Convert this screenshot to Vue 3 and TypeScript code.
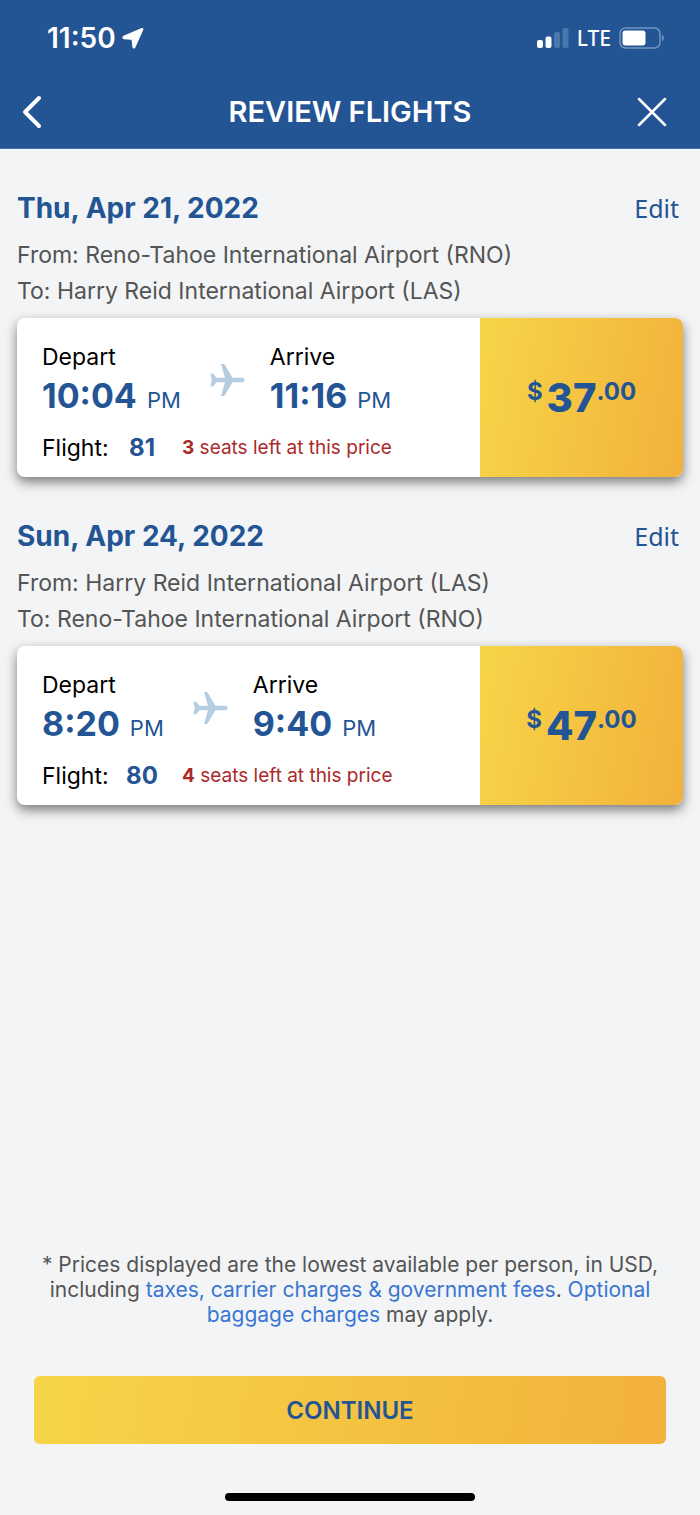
<script setup lang="ts">
interface Clock {
  time: string
  period: string
}

interface Flight {
  date: string
  from: string
  to: string
  depart: Clock
  arrive: Clock
  number: string
  seats: number
  dollars: string
  cents: string
}

const flights: Flight[] = [
  {
    date: 'Thu, Apr 21, 2022',
    from: 'Reno-Tahoe International Airport (RNO)',
    to: 'Harry Reid International Airport (LAS)',
    depart: { time: '10:04', period: 'PM' },
    arrive: { time: '11:16', period: 'PM' },
    number: '81',
    seats: 3,
    dollars: '37',
    cents: '.00',
  },
  {
    date: 'Sun, Apr 24, 2022',
    from: 'Harry Reid International Airport (LAS)',
    to: 'Reno-Tahoe International Airport (RNO)',
    depart: { time: '8:20', period: 'PM' },
    arrive: { time: '9:40', period: 'PM' },
    number: '80',
    seats: 4,
    dollars: '47',
    cents: '.00',
  },
]
</script>

<template>
  <div class="screen">
    <header class="top">
      <div class="status">
        <div class="clock">
          <span>11:50</span>
          <svg width="22" height="22" viewBox="0 0 22 22" aria-hidden="true">
            <path d="M19.600 1 1.600 8.700C0 9.400.2 12 2 12.200l7 .6c.4 0 .6.200.7.600l.7 6.600c.2 1.900 2.300 2 3 .4L21.300 2.700c.5-1.200-.5-2.100-1.700-1.700Z" fill="#fff" />
          </svg>
        </div>
        <div class="signals">
          <svg width="32" height="22" viewBox="0 0 32 22" aria-hidden="true">
            <rect x="0" y="13" width="6" height="8" rx="2" fill="#fff" />
            <rect x="8.500" y="9.500" width="6" height="11.500" rx="2" fill="#fff" />
            <rect x="17" y="5" width="6" height="16" rx="2" fill="#4a78ac" />
            <rect x="25.500" y="1" width="6" height="20" rx="2" fill="#4a78ac" />
          </svg>
          <span class="network">LTE</span>
          <svg width="46" height="22" viewBox="0 0 46 22" aria-hidden="true">
            <rect x="1" y="1" width="40" height="20" rx="5.500" fill="none" stroke="#7395bf" stroke-width="1.500" />
            <rect x="3.500" y="3.500" width="23" height="15" rx="3" fill="#fff" />
            <path d="M43 7.500c2.300 1.500 2.300 5.500 0 7Z" fill="#7395bf" />
          </svg>
        </div>
      </div>
      <div class="nav">
        <button class="icon-button back" type="button" aria-label="Back">
          <svg width="22" height="34" viewBox="0 0 22 34" aria-hidden="true">
            <path d="M18 3 4 17l14 14" fill="none" stroke="#fff" stroke-width="4" stroke-linecap="round" stroke-linejoin="round" />
          </svg>
        </button>
        <h1>REVIEW FLIGHTS</h1>
        <button class="icon-button" type="button" aria-label="Close">
          <svg width="30" height="30" viewBox="0 0 30 30" aria-hidden="true">
            <path d="m2 2 26 26M28 2 2 28" fill="none" stroke="#fff" stroke-width="2.500" stroke-linecap="round" />
          </svg>
        </button>
      </div>
    </header>

    <main class="content">
      <section v-for="flight in flights" :key="flight.number" class="leg">
        <div class="leg-head">
          <h2>{{ flight.date }}</h2>
          <a href="#" class="edit">Edit</a>
        </div>
        <p class="place">From: {{ flight.from }}</p>
        <p class="place">To: {{ flight.to }}</p>

        <div class="card">
          <div class="details">
            <div class="times">
              <div>
                <div class="label">Depart</div>
                <div class="time"><b>{{ flight.depart.time }}</b><span>{{ flight.depart.period }}</span></div>
              </div>
              <svg class="plane" width="35" height="32" viewBox="0 0 35 32" aria-hidden="true">
                <path d="M11 0h2.200c.8 0 1.300.3 1.700 1L22.500 13.700h9.800c3 0 3 4.600 0 4.600h-9.800L14.900 31c-.4.700-.9 1-1.700 1H11l4-13.700H6.500L3.200 22.200H.4L1.700 16 .4 9.800h2.800l3.300 3.900H15Z" fill="#b6cce0" />
              </svg>
              <div>
                <div class="label">Arrive</div>
                <div class="time"><b>{{ flight.arrive.time }}</b><span>{{ flight.arrive.period }}</span></div>
              </div>
            </div>
            <div class="info">
              <span class="label">Flight:</span>
              <b class="number">{{ flight.number }}</b>
              <span class="seats"><b>{{ flight.seats }}</b> seats left at this price</span>
            </div>
          </div>
          <div class="price">
            <span class="small">$</span><span class="dollars">{{ flight.dollars }}</span><span class="small">{{ flight.cents }}</span>
          </div>
        </div>
      </section>
    </main>

    <footer class="bottom">
      <p class="note">
        * Prices displayed are the lowest available per person, in USD,<br />
        including <a href="#">taxes, carrier charges &amp; government fees</a>. <a href="#">Optional<br />baggage charges</a> may apply.
      </p>
      <button class="continue" type="button">CONTINUE</button>
      <div class="home-bar"></div>
    </footer>
  </div>
</template>

<style>
body {
  margin: 0;
  background: #f3f4f6;
}
</style>

<style scoped>
.screen {
  display: flex;
  flex-direction: column;
  min-height: 100vh;
  background: #f3f4f6;
  color: #000;
  font-family: Inter, "Liberation Sans", sans-serif;
}

h1,
h2,
p {
  margin: 0;
}

a {
  text-decoration: none;
}

.top {
  background: #235494;
  border-bottom: 1px solid #4673a9;
  color: #fff;
}

.status {
  display: flex;
  align-items: center;
  justify-content: space-between;
  height: 76px;
  padding: 0 35px 0 47px;
}

.clock {
  display: flex;
  align-items: center;
  gap: 6px;
  font-size: 28px;
  font-weight: 600;
}

.signals {
  display: flex;
  align-items: center;
  gap: 8px;
}

.network {
  font-family: "Noto Sans", sans-serif;
  font-size: 21px;
  font-weight: 500;
  line-height: 22px;
}

.nav {
  display: flex;
  align-items: center;
  justify-content: space-between;
  height: 72px;
  padding: 0 33px 0 21px;
}

.icon-button {
  display: flex;
  align-items: center;
  width: 30px;
  padding: 0;
  border: 0;
  background: none;
}

.back {
  width: 42px;
}

h1 {
  font-size: 29px;
  font-weight: 600;
  line-height: 36px;
}

.content {
  padding: 0 17px;
}

.leg {
  padding-top: 39px;
}

.leg-head {
  display: flex;
  align-items: center;
  justify-content: space-between;
  height: 40px;
  margin-bottom: 9px;
  padding-right: 4px;
}

h2 {
  color: #235494;
  font-size: 28px;
  font-weight: 700;
}

.edit {
  color: #235494;
  font-family: "Noto Sans", sans-serif;
  font-size: 25px;
  line-height: 32px;
}

.place {
  color: #545454;
  font-size: 23px;
  line-height: 36px;
}

.card {
  display: grid;
  grid-template-columns: 463fr 203fr;
  margin-top: 9px;
  overflow: hidden;
  border-radius: 8px;
  background: #fff;
  box-shadow: 0 5px 12px rgba(0, 0, 0, 0.5);
}

.details {
  padding: 25px 0 15px 25px;
}

.times {
  display: flex;
  align-items: center;
}

.label {
  font-size: 23px;
  line-height: 28px;
}

.time {
  display: flex;
  align-items: baseline;
  gap: 10px;
  height: 40px;
  margin-top: 5px;
  color: #235494;
  font-size: 22px;
  line-height: 40px;
}

.time b {
  font-size: 34px;
}

.plane {
  margin: 0 25px 0 29px;
}

.info {
  display: grid;
  grid-template-columns: 74px 52px 1fr;
  align-items: center;
  height: 28px;
  margin-top: 18px;
  line-height: 28px;
}

.number {
  color: #235494;
  font-size: 24px;
  text-align: center;
}

.seats {
  padding-left: 14px;
  color: #aa2a2a;
  font-size: 19px;
}

.price {
  display: flex;
  align-items: flex-start;
  justify-content: center;
  padding-top: 58px;
  background: linear-gradient(100deg, #f6d548, #f3b13b);
  color: #235494;
  font-weight: 700;
}

.small {
  font-size: 24px;
  line-height: 32px;
}

.dollars {
  margin-left: 4px;
  font-size: 40px;
  font-weight: 800;
  line-height: 44px;
}

.bottom {
  display: flex;
  flex-direction: column;
  align-items: center;
  margin-top: auto;
  padding: 0 34px 14px;
}

.note {
  color: #545454;
  font-size: 21px;
  line-height: 25px;
  text-align: center;
}

.note a {
  color: #3a76d0;
}

.continue {
  width: 100%;
  height: 68px;
  margin: 49px 0;
  border: 0;
  border-radius: 6px;
  background: linear-gradient(100deg, #f6d548, #f3b13b);
  color: #235494;
  font-family: inherit;
  font-size: 24px;
  font-weight: 600;
}

.home-bar {
  width: 250px;
  height: 8px;
  border-radius: 4px;
  background: #000;
}
</style>
